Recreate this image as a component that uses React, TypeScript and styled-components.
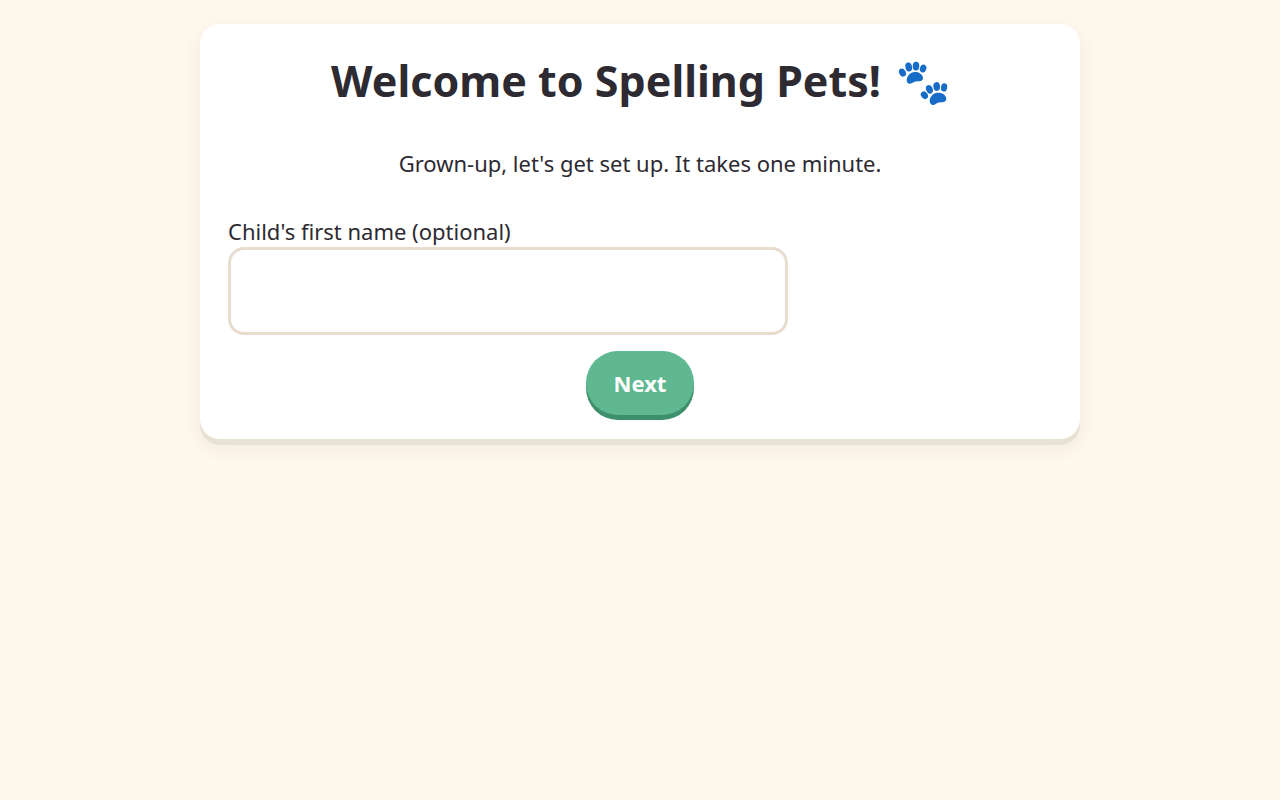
import React, { useState } from "react";
import styled, { createGlobalStyle } from "styled-components";

const GlobalStyle = createGlobalStyle`
  * { box-sizing: border-box; }
  body {
    margin: 0;
    background: #fff8ec;
    color: #2d2a32;
    font-family: "Noto Sans", "Open Sans", sans-serif;
    font-size: 22px;
    line-height: 32px;
  }
`;

const Page = styled.main`
  max-width: 928px;
  margin: 0 auto;
  padding: 24px;
`;

const Card = styled.form`
  display: flex;
  flex-direction: column;
  padding: 24px 28px;
  border-radius: 20px;
  background: #fff;
  box-shadow: 0 6px 0 #e8e2d4, 0 8px 24px rgba(45, 42, 50, 0.08);
`;

const Title = styled.h1`
  display: flex;
  align-items: center;
  justify-content: center;
  gap: 16px;
  margin: 0 0 33px;
  font-size: 43px;
  line-height: 66px;
  font-weight: 700;
`;

const Paws = styled.svg`
  flex: none;
  width: 52px;
  height: 54px;
  fill: #176cc7;
`;

const Intro = styled.p`
  margin: 0 0 36px;
  text-align: center;
`;

const Label = styled.label`
  align-self: flex-start;
`;

const NameInput = styled.input`
  width: 100%;
  max-width: 560px;
  height: 88px;
  margin-bottom: 16px;
  padding: 12px 20px;
  border: 3px solid #e8dccf;
  border-radius: 16px;
  background: #fff;
  color: inherit;
  font: inherit;
  font-size: 40px;
  outline: none;

  &:focus { border-color: #5fb890; }
`;

const NextButton = styled.button`
  align-self: center;
  height: 64px;
  padding: 0 28px;
  border: 0;
  border-radius: 32px;
  background: #5fb890;
  box-shadow: 0 5px 0 #3e8f6b;
  color: #fff;
  font: inherit;
  font-weight: 700;
  cursor: pointer;
`;

function PawPrints() {
  return (
    <Paws viewBox="0 -6 52 54" role="img" aria-label="Paw prints">
      <ellipse cx="5.5" cy="12.6" rx="3.3" ry="4.2" transform="rotate(-26 5.5 12.6)" />
      <ellipse cx="11.7" cy="7" rx="3.3" ry="4.6" transform="rotate(-10 11.7 7)" />
      <ellipse cx="19" cy="6.2" rx="3.3" ry="4.4" transform="rotate(3 19 6.2)" />
      <ellipse cx="26.1" cy="8.6" rx="3.2" ry="4" transform="rotate(18 26.1 8.6)" />
      <path d="M9.7 19.7C10 16 13.5 12.3 17.5 12C21.8 11.5 25.5 14.2 26 17.5C26.3 20.5 24 21.7 21 21.2C18.5 21 17 21.8 15 23.1C12.2 24.7 9.4 23 9.7 19.7Z" />
      <ellipse cx="27.4" cy="35.2" rx="3.2" ry="4.1" transform="rotate(-36 27.4 35.2)" />
      <ellipse cx="32.4" cy="29.3" rx="3.3" ry="4.4" transform="rotate(-22 32.4 29.3)" />
      <ellipse cx="39.7" cy="26.5" rx="3.3" ry="4.4" transform="rotate(-7 39.7 26.5)" />
      <ellipse cx="47.1" cy="27.4" rx="3.1" ry="4.1" transform="rotate(9 47.1 27.4)" />
      <path d="M32.7 40.8C32.8 37 36 33.3 40 32.8C44.4 32.2 48.6 34.5 49.2 38C49.7 41 47.4 42.3 44.4 42.2C41.8 42.1 40 43 38 44.4C35.5 45.9 32.5 44.3 32.7 40.8Z" />
    </Paws>
  );
}

export default function App() {
  const [name, setName] = useState("");
  return (
    <>
      <GlobalStyle />
      <Page>
        <Card onSubmit={(event) => event.preventDefault()}>
          <Title>
            Welcome to Spelling Pets!
            <PawPrints />
          </Title>
          <Intro>Grown-up, let's get set up. It takes one minute.</Intro>
          <Label htmlFor="child-name">Child's first name (optional)</Label>
          <NameInput
            id="child-name"
            type="text"
            value={name}
            onChange={(event) => setName(event.target.value)}
          />
          <NextButton type="submit">Next</NextButton>
        </Card>
      </Page>
    </>
  );
}
